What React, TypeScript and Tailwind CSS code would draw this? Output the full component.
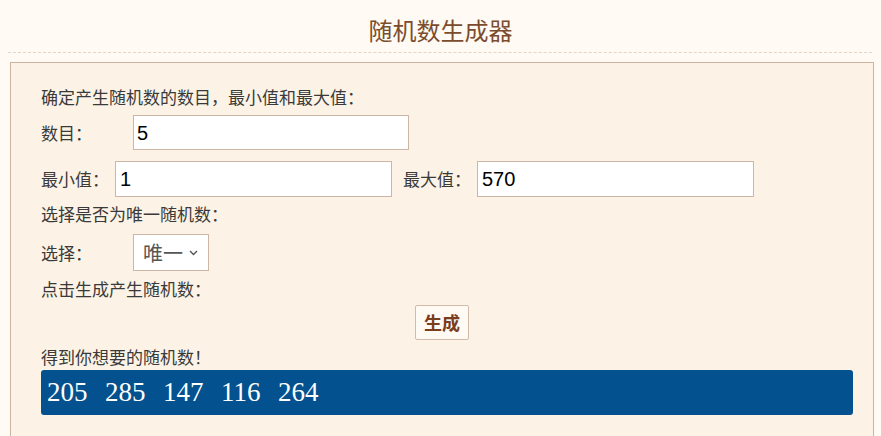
import React from "react";

const cjk = { fontFamily: '"Noto Sans CJK SC", "Noto Sans", sans-serif' };

export default function App() {
  const nums = ["205", "285", "147", "116", "264"];
  return (
    <div className="min-h-[436px] w-full bg-[#fffaf3] overflow-hidden" style={cjk}>
      <div className="h-[52px] flex items-center justify-center pt-[8px]">
        <h1 className="text-[24px] leading-none text-[#7b4d2e] font-normal">随机数生成器</h1>
      </div>
      <div className="ml-[8px] mr-[9px] border-t border-dashed border-[#e6d5c3]" />
      <div className="ml-[10px] mr-[7px] mt-[9px] border border-[#cfb3a2] bg-[#fcf3e6] pl-[30px] pr-[20px] pt-[22px] pb-[40px] text-[#3a3a3a] text-[17px]">
        <div className="h-[24px] leading-[24px]">确定产生随机数的数目，最小值和最大值：</div>
        <div className="mt-[6px] h-[35px] flex items-center">
          <span className="w-[92px]">数目：</span>
          <div className="w-[276px] h-[35px] border border-[#cdb6a6] bg-white flex items-center pl-[3px] text-[20px] text-black" style={{ fontFamily: '"Liberation Sans", Arial, sans-serif' }}>5</div>
        </div>
        <div className="mt-[11px] h-[36px] flex items-center">
          <span className="w-[74px]">最小值：</span>
          <div className="w-[277px] h-[36px] border border-[#cdb6a6] bg-white flex items-center pl-[4px] text-[20px] text-black" style={{ fontFamily: '"Liberation Sans", Arial, sans-serif' }}>1</div>
          <span className="ml-[11px] w-[74px]">最大值：</span>
          <div className="w-[277px] h-[36px] border border-[#cdb6a6] bg-white flex items-center pl-[4px] text-[20px] text-black" style={{ fontFamily: '"Liberation Sans", Arial, sans-serif' }}>570</div>
        </div>
        <div className="mt-[5px] h-[24px] leading-[24px]">选择是否为唯一随机数：</div>
        <div className="mt-[8px] h-[37px] flex items-center">
          <span className="w-[92px]">选择：</span>
          <div className="w-[76px] h-[37px] border border-[#cdb6a6] bg-white flex items-center pl-[9px] text-[20px] text-[#555]">
            <span>唯一</span>
            <svg className="ml-[6px]" width="9" height="6" viewBox="0 0 9 6" fill="none">
              <path d="M1 1 L4.5 4.5 L8 1" stroke="#555" strokeWidth="1.4" />
            </svg>
          </div>
        </div>
        <div className="mt-[6px] h-[24px] leading-[24px]">点击生成产生随机数：</div>
        <div className="mt-[4px] flex justify-center pr-[10px]">
          <div className="w-[54px] h-[35px] border border-[#d3bba9] rounded-[2px] bg-[#fffaf4] flex items-center justify-center text-[18px] font-bold text-[#7a3d1d]">生成</div>
        </div>
        <div className="mt-[5px] h-[24px] leading-[24px]">得到你想要的随机数！</div>
        <div className="mt-[1px] h-[45px] rounded-[3px] bg-[#03528f] flex items-center pl-[6px] text-white text-[27px]" style={{ fontFamily: '"Liberation Serif", "Times New Roman", serif' }}>
          {nums.map((n, i) => (
            <span key={i} className="mr-[17.5px]">{n}</span>
          ))}
        </div>
      </div>
    </div>
  );
}
